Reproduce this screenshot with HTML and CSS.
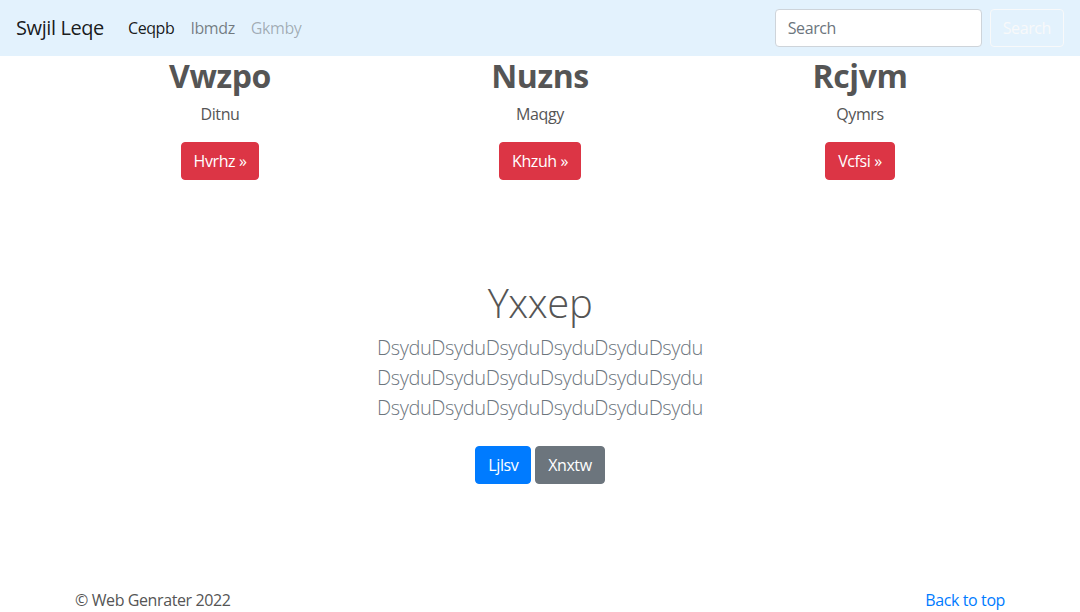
FILE: index.html
```html
<!DOCTYPE html>
<html lang="en">
<head>
<meta charset="utf-8">
<title>Swjil Leqe</title>
<link rel="stylesheet" href="styles.css">
</head>
<body>
<header class="navbar">
  <a class="brand" href="#">Swjil Leqe</a>
  <nav class="nav">
    <a class="nav-link active" href="#">Ceqpb</a>
    <a class="nav-link" href="#">Ibmdz</a>
    <a class="nav-link disabled" href="#">Gkmby</a>
  </nav>
  <form class="search">
    <input class="search-input" type="text" placeholder="Search">
    <button class="search-btn" type="button">Search</button>
  </form>
</header>
<main>
  <div class="container">
    <div class="row">
      <div class="col">
        <h2 class="col-title">Vwzpo</h2>
        <p class="col-text">Ditnu</p>
        <p class="col-action"><a class="btn btn-danger" href="#">Hvrhz »</a></p>
      </div>
      <div class="col">
        <h2 class="col-title">Nuzns</h2>
        <p class="col-text">Maqgy</p>
        <p class="col-action"><a class="btn btn-danger" href="#">Khzuh »</a></p>
      </div>
      <div class="col">
        <h2 class="col-title">Rcjvm</h2>
        <p class="col-text">Qymrs</p>
        <p class="col-action"><a class="btn btn-danger" href="#">Vcfsi »</a></p>
      </div>
    </div>
  </div>
  <section class="jumbotron">
    <div class="jumbo-inner">
      <h1 class="jumbo-title">Yxxep</h1>
      <p class="lead">DsyduDsyduDsyduDsyduDsyduDsydu<br>DsyduDsyduDsyduDsyduDsyduDsydu<br>DsyduDsyduDsyduDsyduDsyduDsydu</p>
      <p class="jumbo-actions">
        <a class="btn btn-primary" href="#">Ljlsv</a>
        <a class="btn btn-secondary" href="#">Xnxtw</a>
      </p>
    </div>
  </section>
</main>
<footer class="footer">
  <div class="footer-inner">
    <p class="copy">© Web Genrater 2022</p>
    <p class="top-link"><a href="#">Back to top</a></p>
  </div>
</footer>
</body>
</html>
```
FILE: styles.css
```css
* { box-sizing: border-box; }
html, body { margin: 0; padding: 0; }
body {
  font-family: "Open Sans", "Noto Sans", "Liberation Sans", sans-serif;
  font-size: 16px;
  line-height: 1.5;
  letter-spacing: -0.025em;
  color: #555;
  background: #fff;
}
a { text-decoration: none; }
p { margin: 0; }

.navbar {
  display: flex;
  align-items: center;
  height: 56px;
  padding: 8px 16px;
  background: #e3f2fd;
}
.brand {
  font-size: 20px;
  line-height: 30px;
  color: rgba(0,0,0,.9);
  margin-right: 16px;
  padding: 5px 0;
}
.nav { display: flex; flex: 1; }
.nav-link {
  padding: 8px;
  color: rgba(0,0,0,.5);
  font-size: 16px;
}
.nav-link.active { color: rgba(0,0,0,.9); }
.nav-link.disabled { color: rgba(0,0,0,.3); }
.search { display: flex; align-items: center; }
.search-input {
  width: 207px;
  height: 38px;
  padding: 6px 12px;
  font: inherit;
  font-size: 16px;
  letter-spacing: inherit;
  color: #495057;
  background: #fff;
  border: 1px solid #ced4da;
  border-radius: 4px;
  margin-right: 8px;
}
.search-input::placeholder { color: #6c757d; }
.search-btn {
  height: 38px;
  padding: 6px 12px;
  font: inherit;
  font-size: 16px;
  letter-spacing: inherit;
  color: #f8f9fa;
  background: transparent;
  border: 1px solid #f8f9fa;
  border-radius: 4px;
}

.container { width: 960px; margin: 0 auto; padding: 0 15px; }
.row { display: flex; margin: 0 -15px; }
.col {
  flex: 1;
  padding: 0 15px;
  text-align: center;
  margin-bottom: 24px;
}
.col-title {
  margin: 1px 0 7px;
  font-size: 32px;
  line-height: 1.2;
  font-weight: 700;
  color: #555;
}
.col-text { margin-bottom: 16px; }
.btn {
  display: inline-block;
  padding: 6px 12px;
  font-size: 16px;
  line-height: 24px;
  border: 1px solid transparent;
  border-radius: 4px;
  color: #fff;
}
.btn-danger { background: #dc3545; border-color: #dc3545; }
.btn-primary { background: #007bff; border-color: #007bff; }
.btn-secondary { background: #6c757d; border-color: #6c757d; }

.jumbotron {
  padding: 75px 32px 48px;
  text-align: center;
}
.jumbo-inner { max-width: 640px; margin: 0 auto; }
.jumbo-title {
  margin: 0 0 6px;
  font-size: 40px;
  line-height: 1.2;
  font-weight: 300;
}
.lead {
  font-size: 20px;
  line-height: 30px;
  font-weight: 300;
  color: #6c757d;
  margin-bottom: 15px;
}
.jumbo-actions .btn { margin: 8px 0; }

.footer { padding: 48px 0; color: #555; }
.footer-inner {
  width: 960px;
  margin: 0 auto;
  padding: 0 15px;
  display: flex;
  justify-content: space-between;
}
.copy { margin-bottom: 16px; }
.top-link a { color: #007bff; }
```
